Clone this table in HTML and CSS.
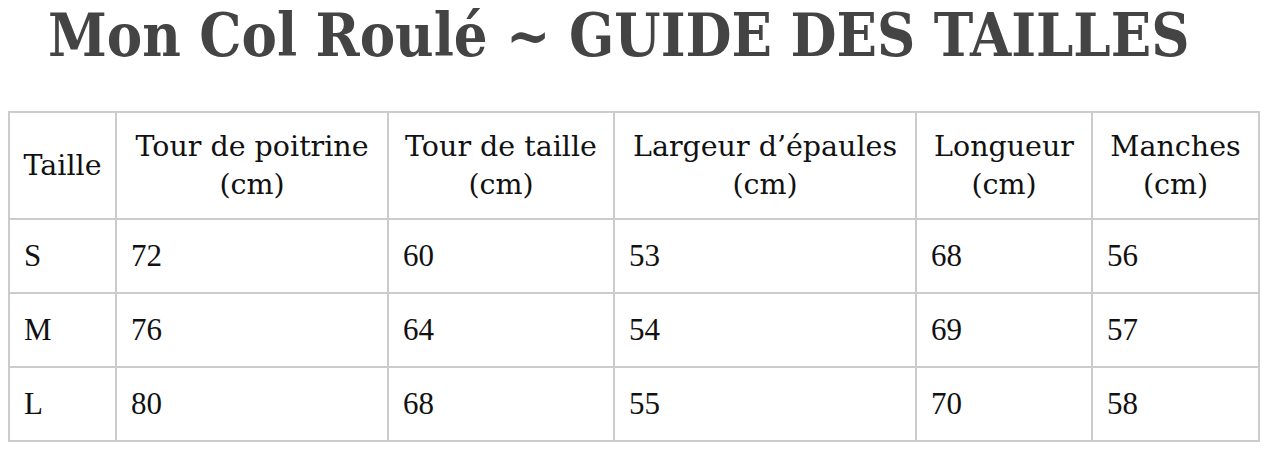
FILE: index.html
```html
<!DOCTYPE html>
<html lang="fr">
<head>
<meta charset="utf-8">
<title>Guide des tailles</title>
<link rel="stylesheet" href="styles.css">
</head>
<body>
<h1 class="title">Mon Col Roulé ~ GUIDE DES TAILLES</h1>
<table class="sizes">
  <colgroup>
    <col class="c1"><col class="c2"><col class="c3"><col class="c4"><col class="c5"><col class="c6">
  </colgroup>
  <thead>
    <tr class="head-row">
      <th>Taille</th>
      <th>Tour de poitrine<br>(cm)</th>
      <th>Tour de taille<br>(cm)</th>
      <th>Largeur d’épaules<br>(cm)</th>
      <th>Longueur<br>(cm)</th>
      <th>Manches<br>(cm)</th>
    </tr>
  </thead>
  <tbody>
    <tr class="body-row"><td>S</td><td>72</td><td>60</td><td>53</td><td>68</td><td>56</td></tr>
    <tr class="body-row"><td>M</td><td>76</td><td>64</td><td>54</td><td>69</td><td>57</td></tr>
    <tr class="body-row"><td>L</td><td>80</td><td>68</td><td>55</td><td>70</td><td>58</td></tr>
  </tbody>
</table>
</body>
</html>
```
FILE: styles.css
```css
html, body {
  background: #ffffff;
}
body {
  margin: 8px;
}
.title {
  margin: 0;
  padding: 0 0 0 40px;
  height: 100px;
  box-sizing: border-box;
  font-family: "DejaVu Serif Condensed", "DejaVu Serif", serif;
  font-stretch: semi-condensed;
  font-weight: bold;
  font-size: 59px;
  line-height: 56px;
  color: #444444;
  text-align: left;
  white-space: nowrap;
}
.sizes {
  width: 1252px;
  border-collapse: separate;
  border-spacing: 0;
  table-layout: fixed;
  margin-top: 3px;
  border-top: 2px solid #cccccc;
  border-left: 2px solid #cccccc;
}
.c1 { width: 107px; }
.c2 { width: 272px; }
.c3 { width: 226px; }
.c4 { width: 302px; }
.c5 { width: 176px; }
.c6 { width: 167px; }
.sizes th, .sizes td {
  border-right: 2px solid #cccccc;
  border-bottom: 2px solid #cccccc;
  color: #111111;
  box-sizing: border-box;
}
.head-row { height: 107px; }
.body-row { height: 74px; }
.sizes th {
  font-family: "DejaVu Serif", serif;
  font-weight: normal;
  font-size: 28.5px;
  line-height: 38px;
  padding: 0 4px;
  text-align: center;
  vertical-align: middle;
}
.sizes td {
  font-family: "Liberation Serif", serif;
  font-size: 31px;
  line-height: 36px;
  padding: 0 14px;
  text-align: left;
  vertical-align: middle;
}
```
